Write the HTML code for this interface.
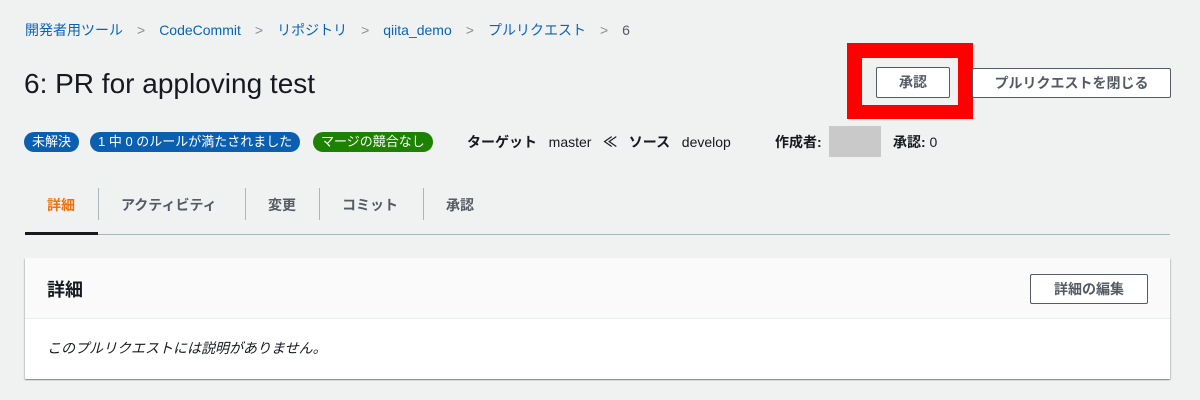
<!DOCTYPE html>
<html><head><meta charset="utf-8"><style>
*{margin:0;padding:0;box-sizing:border-box}
body{width:1200px;height:400px;background:#f0f1f1;font-family:"Liberation Sans","Noto Sans CJK JP",sans-serif;color:#16191f;position:relative;overflow:hidden}
.a{position:absolute;white-space:nowrap}
.bc{top:20px;left:25px;font-size:14px;color:#545b64;line-height:20px}
.bc a{color:#0a63b8;text-decoration:none}
.bc .s{color:#879196;margin:0 14px}
h1{position:absolute;left:24px;top:66px;font-size:28px;font-weight:normal;line-height:36px}
.btn{position:absolute;border:1px solid #545b64;background:#fff;font-size:14px;font-weight:bold;color:#545b64;text-align:center;line-height:28px;border-radius:2px}
.badge{position:absolute;top:132px;height:20px;line-height:20px;border-radius:10px;color:#fff;font-size:13px;padding:0 8px}
.meta{top:132px;font-size:14px;line-height:20px}
.tab{top:195px;font-size:14px;font-weight:bold;color:#545b64;line-height:20px}
.sep{position:absolute;top:188px;width:1px;height:32px;background:#aab7b8}
</style></head><body>
<div class="a bc"><a>開発者用ツール</a><span class="s">&gt;</span><a>CodeCommit</a><span class="s">&gt;</span><a>リポジトリ</a><span class="s">&gt;</span><a>qiita_demo</a><span class="s">&gt;</span><a>プルリクエスト</a><span class="s">&gt;</span>6</div>
<h1>6: PR for apploving test</h1>
<div class="a" style="left:847px;top:43px;width:126px;height:76px;border:15px solid #f00;border-bottom-width:14px"></div>
<div class="btn" style="left:876px;top:67px;width:74px;height:31px;line-height:29px">承認</div>
<div class="btn" style="left:972px;top:68px;width:199px;height:30px">プルリクエストを閉じる</div>
<div class="badge" style="left:24px;background:#0b5fb0">未解決</div>
<div class="badge" style="left:90px;background:#0b5fb0">1 中 0 のルールが満たされました</div>
<div class="badge" style="left:313px;background:#1d8102">マージの競合なし</div>
<div class="a meta" style="left:467px"><b>ターゲット</b>&nbsp;&nbsp; master &nbsp;&nbsp;<b>≪</b>&nbsp;&nbsp; <b>ソース</b>&nbsp;&nbsp; develop</div>
<div class="a meta" style="left:775px"><b>作成者:</b></div>
<div class="a" style="left:829px;top:126px;width:52px;height:31px;background:#c9c9c9"></div>
<div class="a meta" style="left:893px"><b>承認:</b> 0</div>
<div class="a tab" style="left:47px;color:#ec7211">詳細</div>
<div class="sep" style="left:98px"></div>
<div class="a tab" style="left:121px">アクティビティ</div>
<div class="sep" style="left:245px"></div>
<div class="a tab" style="left:268px">変更</div>
<div class="sep" style="left:319px"></div>
<div class="a tab" style="left:342px">コミット</div>
<div class="sep" style="left:423px"></div>
<div class="a tab" style="left:446px">承認</div>
<div class="a" style="left:25px;top:234px;width:1145px;height:1px;background:#aab7b8"></div>
<div class="a" style="left:25px;top:232px;width:73px;height:3px;background:#16191f"></div>
<div class="a" style="left:25px;top:258px;width:1145px;height:121px;background:#fff;box-shadow:0 1px 1px rgba(0,28,36,.3),1px 1px 1px rgba(0,28,36,.15),-1px 1px 1px rgba(0,28,36,.15)">
<div style="height:61px;background:#fafafa;border-bottom:1px solid #eaeded;position:relative">
<div class="a" style="left:22px;top:20px;font-size:18px;font-weight:bold;line-height:24px">詳細</div>
<div class="btn" style="left:1005px;top:16px;width:118px;height:30px">詳細の編集</div>
</div>
<div class="a" style="left:22px;top:80px;font-size:14px;font-style:italic;line-height:20px">このプルリクエストには説明がありません。</div>
</div>
</body></html>
